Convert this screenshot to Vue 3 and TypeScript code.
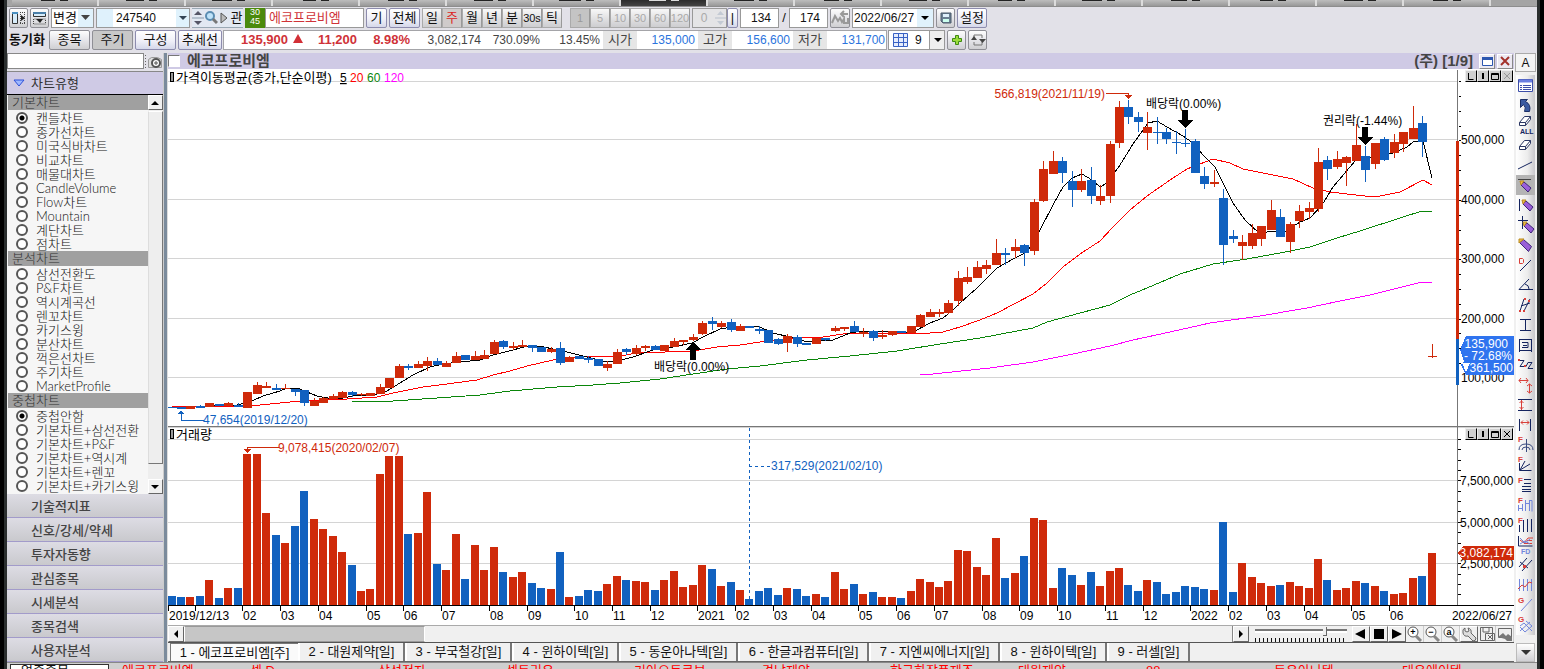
<script setup lang="ts">
import { ref } from 'vue'

type Shape = { d?: string; s?: string; f?: string; w?: number; t?: string; x?: number; y?: number; z?: number }

const RED = '#cf2a0a'
const BLUE = '#1161bf'
const NAVY = '#14245f'
const MARK = '#d9403a'
const SOFT = '#7186dc'

const code = ref('247540')
const issueName = ref('에코프로비엠')
const bars = ref('134')
const total = ref('174')
const sliderPos = ref(77)
const chartType = ref('캔들차트')
const overlayType = ref('중첩안함')

const periods = ['일', '주', '월', '년', '분', '30s', '틱']
const minutes = ['1', '5', '10', '30', '60', '120']
const topTabs = [14, 18, 20, 13, 16, 19, 22, 17, 20, 15, 18, 14, 20, 16, 13, 19, 15]
const mainGroups = [
  { title: '기본차트', name: 'base', items: ['캔들차트', '종가선차트', '미국식바차트', '비교차트', '매물대차트', 'CandleVolume', 'Flow차트', 'Mountain', '계단차트', '점차트'] },
  { title: '분석차트', name: 'base', items: ['삼선전환도', 'P&F차트', '역시계곡선', '렌꼬차트', '카기스윙', '분산차트', '꺽은선차트', '주기차트', 'MarketProfile'] },
]
const overlays = ['중첩안함', '기본차트+삼선전환', '기본차트+P&F', '기본차트+역시계', '기본차트+렌꼬', '기본차트+카기스윙']
const sections = ['기술적지표', '신호/강세/약세', '투자자동향', '관심종목', '시세분석', '종목검색', '사용자분석']
const chartTabs = [
  { t: '1 - 에코프로비엠[주]', w: 128 },
  { t: '2 - 대원제약[일]', w: 107 },
  { t: '3 - 부국철강[일]', w: 107 },
  { t: '4 - 윈하이텍[일]', w: 107 },
  { t: '5 - 동운아나텍[일]', w: 119 },
  { t: '6 - 한글과컴퓨터[일]', w: 131 },
  { t: '7 - 지엔씨에너지[일]', w: 131 },
  { t: '8 - 윈하이텍[일]', w: 107 },
  { t: '9 - 러셀[일]', w: 83 },
]
const ticker = ['에코프로비엠', '셀 D', '삼성전자', '셀트리온', '기아오토큐브', '경남제약', '한국화장품제조', '대원제약', '88', '동운아나텍', '대유에이텍']

// body top, body bottom, high, low, rising flag, volume top
const raw = `407 408 407 408 0 596|407 409 407 409 0 597|406 409 406 409 1 597|406 408 405 408 0 596|403 407 403 407 1 580|404 406 404 406 0 598|403 406 402 406 1 588|405 407 403 407 0 588|392 408 392 408 1 454|385 394 382 394 1 454|386 388 382 388 1 513|388 390 384 390 0 535|388 389 384 389 1 543|389 392 389 396 0 526|390 403 390 406 0 491|401 406 398 406 1 519|398 403 397 403 1 529|396 399 394 399 1 536|392 398 391 398 1 552|392 395 391 397 0 565|394 395 393 396 1 591|393 396 393 396 1 589|387 394 384 394 1 474|378 388 378 388 1 456|366 378 364 378 1 456|366 368 364 370 0 534|364 368 361 368 1 533|361 366 357 371 1 492|361 365 358 365 0 564|363 367 361 367 1 570|356 363 352 363 1 534|355 360 355 360 0 579|356 360 351 360 1 545|355 359 350 359 1 570|342 354 340 354 1 547|341 347 340 349 0 572|346 348 342 350 1 577|345 347 340 347 1 572|345 348 345 352 0 583|347 352 347 352 0 588|349 352 347 353 1 589|348 363 342 365 0 552|357 362 356 362 1 597|356 359 356 359 0 596|358 360 356 363 0 590|359 366 359 366 0 591|364 368 361 371 1 584|352 364 349 364 1 576|349 352 348 355 0 580|348 354 345 355 1 581|346 348 345 351 1 582|346 350 345 350 0 590|345 351 345 351 1 580|341 347 338 347 1 571|340 342 340 345 1 587|337 340 334 341 1 585|323 334 321 335 1 565|321 324 317 330 0 569|323 327 321 328 1 586|322 330 319 332 0 582|326 331 324 331 1 590|326 328 326 328 0 599|329 331 326 334 0 591|330 343 330 343 0 588|339 344 338 345 0 595|336 343 334 352 1 588|337 344 335 347 0 589|343 345 343 345 0 596|338 344 338 344 1 594|338 340 338 341 0 597|328 331 326 332 1 572|327 329 327 331 1 589|326 332 321 332 0 584|332 334 328 337 1 594|331 338 330 341 0 592|335 337 330 339 1 597|331 335 331 336 1 597|331 333 331 333 0 598|326 333 326 333 1 591|315 327 314 327 1 579|312 317 309 317 1 582|312 314 309 317 1 587|303 313 300 314 1 581|278 301 271 306 1 550|277 282 267 284 1 551|267 278 261 278 1 567|265 269 260 274 1 575|253 265 239 265 1 538|253 255 248 265 0 578|247 251 239 258 1 573|245 253 244 266 0 556|202 251 199 255 1 518|169 201 161 202 1 520|161 174 151 174 1 588|161 173 157 183 0 568|181 190 171 207 0 575|181 190 169 192 1 585|180 196 167 204 0 572|196 201 185 205 1 586|144 196 141 203 1 571|107 143 101 148 1 568|107 117 100 124 0 585|117 122 112 132 0 591|127 133 112 150 1 580|132 133 117 144 0 582|132 139 128 144 0 594|142 143 131 154 0 592|143 144 129 147 0 586|141 173 139 173 0 587|176 184 167 189 0 589|182 184 170 187 1 590|198 245 189 265 0 522|236 239 230 243 0 592|242 246 235 260 1 563|233 246 224 249 1 577|226 239 226 246 1 583|210 230 200 230 1 586|217 237 209 237 0 585|224 242 222 253 1 582|211 221 205 228 1 586|208 212 202 219 1 588|162 209 148 212 1 559|160 169 156 180 0 580|159 167 151 169 1 590|157 163 156 186 1 588|145 161 124 161 1 581|156 170 146 182 0 583|143 164 143 169 1 586|139 160 137 161 0 591|142 153 134 158 1 594|132 144 132 152 1 593|128 139 106 139 1 578|123 142 116 157 0 576|356 357 344 358 1 553`

const candles = raw.split('|').map((row, i) => {
  const [top, bottom, high, low, up, vol] = row.split(' ').map(Number)
  const x = Math.round(167.5 + i * 9.475)
  return { x, top, h: bottom - top, high, low, vol, color: up ? RED : BLUE }
})

const averages = [
  { color: '#ff00ff', points: '920,374 933,374 990,368 1033,362 1073,354 1110,346 1133,340 1170,332 1210,323 1260,316 1307,308 1340,301 1370,295 1390,290 1422,282 1432,282' },
  { color: '#0a860a', points: '352,401 393,401 437,398 480,395 510,391 557,387 593,385 620,383 660,379 693,374 727,369 760,366 807,360 850,356 897,351 940,344 980,338 1033,328 1047,322 1080,313 1110,305 1130,295 1147,288 1180,274 1213,264 1247,259 1280,253 1310,247 1337,238 1360,231 1400,218 1422,211 1432,211' },
  { color: '#ff0000', points: '171,406 237,407 260,405 290,402 320,400 347,399 377,397 393,393 423,387 447,384 477,380 493,375 510,371 527,366 553,360 567,358 583,356 620,356 637,353 693,351 717,347 740,345 760,342 800,338 823,337 843,334 877,333 917,334 943,332 960,327 980,320 997,313 1033,294 1047,283 1063,267 1080,254 1100,241 1113,227 1130,210 1147,196 1170,180 1187,169 1213,159 1230,163 1243,169 1263,173 1293,179 1313,188 1330,192 1347,194 1365,196 1380,196 1400,192 1423,180 1432,185' },
  { color: '#000000', points: '210,406 237,405 252,401 263,396 280,391 287,388 297,388 307,392 317,396 333,399 343,398 353,396 373,395 387,391 400,383 413,375 430,367 443,364 460,362 480,360 493,355 513,350 527,346 540,346 557,350 567,352 587,357 603,361 617,361 633,357 653,350 673,347 692,343 703,337 720,329 737,326 760,327 773,333 790,337 807,342 833,340 850,333 863,331 890,332 913,332 930,323 943,318 953,310 960,303 977,288 997,268 1015,258 1027,252 1040,230 1053,205 1063,187 1072,178 1082,174 1092,180 1100,187 1107,183 1120,165 1133,144 1148,123 1157,121 1167,127 1183,136 1193,143 1203,155 1215,167 1225,187 1233,203 1245,220 1260,234 1270,231 1287,232 1292,227 1300,222 1310,218 1322,205 1333,187 1355,161 1375,157 1393,153 1407,147 1413,142 1423,141 1432,178' },
]

const priceGrid = [81, 139, 199, 258, 318, 377]
const volumeGrid = [439, 480, 522, 563]
const priceLabels = [
  { y: 139, t: '500,000' }, { y: 199, t: '400,000' }, { y: 258, t: '300,000' }, { y: 318, t: '200,000' }, { y: 377, t: '100,000' },
]
const volumeLabels = [
  { y: 480, t: '7,500,000' }, { y: 522, t: '5,000,000' }, { y: 563, t: '2,500,000' },
]
const priceTicks = Array.from({ length: 20 }, (_, i) => Math.round(81 + i * 14.85))
const volumeTicks = Array.from({ length: 16 }, (_, i) => Math.round(439 + i * 10.35))
const months: [number, string][] = [
  [168, '2019/12/13'], [195, ''], [242, '02'], [280, '03'], [318, '04'], [366, '05'], [403, '06'], [441, '07'], [489, '08'], [527, '09'],
  [574, '10'], [612, '11'], [650, '12'], [697, '2021'], [735, '02'], [773, '03'], [811, '04'], [858, '05'], [896, '06'], [934, '07'],
  [982, '08'], [1019, '09'], [1057, '10'], [1105, '11'], [1143, '12'], [1190, '2022'], [1228, '02'], [1266, '03'], [1304, '04'], [1351, '05'], [1389, '06'],
]

const pencil = (x: number, y: number): Shape[] => [
  { d: `M${x + 1} ${y + 3}l3 -3 7 6 -3 4z`, f: '#9a5fd8', s: '#3d2478' },
  { d: `M${x} ${y - 1}h4l-3 4z`, f: '#f0c04a', s: '#b98a20' },
]
const eraser = (y: number): Shape[] => [
  { d: `M3.5 ${y + 6.5}l5 -6h6l-5 6zM3.5 ${y + 6.5}v3h6v-3M9.5 ${y + 9.5}l5 -6v-3`, s: '#2b3763', f: '#fff' },
]
const mark = (t: string, y = 8): Shape => ({ t, x: 2, y, z: 8, f: MARK })
const tools: { name: string; shapes: Shape[] }[] = [
  { name: '목록', shapes: [{ d: 'M2.5 4.5h14v12h-14z', s: '#3c4ea8', f: '#fff' }, { d: 'M3 6h13', s: '#6a7ee0', w: 3 }, { d: 'M4 10.5h2M4 12.5h2M4 14.5h2M7 10.5h8M7 12.5h8M7 14.5h8', s: '#3c4ea8' }] },
  { name: '실행취소', shapes: [{ d: 'M4.500 4.500h7l-2 2q6 3 4 10h-5q2-4-1-7l-3 3z', f: '#3a5aa0', s: '#1c2f66' }] },
  { name: '전체지우기', shapes: [...eraser(1), { t: 'ALL', x: 4, y: 19, z: 7, f: NAVY }] },
  { name: '지우기', shapes: eraser(5) },
  { name: '추세선', shapes: [{ d: 'M2 14L16 7', s: NAVY }] },
  { name: '수평선', shapes: [{ d: 'M2 4.5h13', s: '#444' }, ...pencil(4, 7)] },
  { name: '수직선', shapes: [{ d: 'M3.5 4v12', s: NAVY }, ...pencil(6, 6)] },
  { name: '십자선', shapes: [{ d: 'M6.5 1v13M2 5.5h10', s: NAVY }, ...pencil(7, 8)] },
  { name: '자유선', shapes: [{ d: 'M3.5 7.5l4-3 8 7-3 5z', f: '#9a5fd8', s: '#3d2478' }, { d: 'M3 4h5l-5 4z', f: '#f0c04a', s: '#b98a20' }] },
  { name: '가격선', shapes: [{ d: 'M3.5 3.5h3l1 1v3l-1 1h-3z', s: MARK }, { d: 'M4 16L15 5', s: NAVY }] },
  { name: '각도선', shapes: [{ d: 'M13 4L3 14.5h14M9 9q4 1 4 5', s: NAVY }] },
  { name: '평행선', shapes: [{ d: 'M4 16L8 4M8 16L14 4M5 11l9-3', s: NAVY }, { d: 'M3 15h2v2h-2zM8 3h2v2h-2zM12 5h2v2h-2zM7 15h2v2h-2z', f: MARK }] },
  { name: '구간', shapes: [{ d: 'M4 4.5h11M4 15.5h11M9.5 4v12', s: NAVY }] },
  { name: '사각형', shapes: [{ d: 'M3.5 4v13M15.5 4v13M3 4.5h12M3 15.5h12M6 7.5h6v5h-6M7 10.5h4', s: NAVY }] },
  { name: '지그재그', shapes: [{ d: 'M3 5.5h5l-4 6h6l2-4h4l-4 6h5', s: NAVY }, { d: 'M2 4h2v2h-2zM8 10h2v2h-2z', f: MARK }] },
  { name: '이동폭', shapes: [{ d: 'M3 5.5h9M5 3l-2 2.5 2 2.5M10 3l2 2.5 -2 2.5M13.5 9v9M11 11l2.5 -2 2.5 2M11 16l2.5 2 2.5 -2', s: MARK }] },
  { name: '세로폭', shapes: [{ d: 'M2 4.5h14M2 15.5h14', s: NAVY }, { d: 'M5.5 5v10M3.5 8l2-2 2 2M3.5 12l2 2 2-2', s: MARK }] },
  { name: '가로폭', shapes: [{ d: 'M3.5 4v12M14.5 4v12', s: NAVY }, { d: 'M5 7.5h8M7 5.500l-2 2 2 2M11 5.5l2 2-2 2', s: MARK }] },
  { name: '피보나치 원', shapes: [mark('F', 7), { d: 'M10.5 4v13M3 15q0-6 7-6t7 6M6 15q0-3 4-3t4 3', s: '#3a4c80' }] },
  { name: '피보나치 부채', shapes: [mark('F', 7), { d: 'M3.5 8v7.5h12M4 15l5-9M4 15l10-6', s: NAVY }] },
  { name: '피보나치 수평', shapes: [mark('F'), { d: 'M8 4.5h7M8 8.5h7M6 11.5h9M6 14.5h9M6 16.5h9', s: NAVY }] },
  { name: '피보나치 주기', shapes: [mark('F'), { d: 'M2.5 10v6M3 13.5h4M6.5 9v7M9.5 5v11M9 8.5h4M13.5 5v11M13 5.5h3v11', s: SOFT }] },
  { name: '피보나치 시간', shapes: [mark('F'), { d: 'M3.5 10v7M7.5 5v12M11.5 4v13M15.5 4v13', s: NAVY }] },
  { name: '피보나치 디나폴리', shapes: [{ d: 'M2.5 1v10h14', s: NAVY }, { d: 'M4 5l4 3 4-5h5M8 8.5h8M11 5.5h5', s: MARK }, { d: 'M4 3l5 5 5-4M4 9l5-3 5 3', s: SOFT }, { t: 'FD', x: 5, y: 19, z: 7, f: SOFT }] },
  { name: '채널', shapes: [{ d: 'M3 12L11 3M6 16L16 5M4 7l8 6', s: NAVY }, { d: 'M7 10h3v3h-3z', f: MARK }] },
  { name: '파동', shapes: [{ d: 'M3.5 4v12M7.5 4v12M11.5 4v12M15.5 4v12', s: SOFT }, { d: 'M2 14l4-4 3 2 4-5 3 1', s: MARK }] },
  { name: '간선', shapes: [mark('G'), { d: 'M5 16L16 4', s: SOFT }] },
  { name: '간격자', shapes: [mark('G', 7), { d: 'M4 11l4-3 8 8M4 16l10-9M9 17l7-6M4 12l5 5M10 6l6 5', s: SOFT }] },
]
const activeTool = ref(5)
</script>

<template>
  <div class="app">
    <nav class="toptabs" aria-label="화면">
      <span v-for="(w, i) in topTabs" :key="i" class="toptab" :class="{ on: i === 7 }">
        <i class="stub" :style="{ width: w + 'px' }"></i><i class="stub thin"></i>
      </span>
    </nav>

    <header class="bars">
      <div class="bar">
        <button class="tb w19" aria-label="왼쪽 패널"><svg width="16" height="16"><path d="M1.5 2.5h5v11h-5z" fill="#d7ecfa" stroke="#333" /><path d="M1 2h6v2h-6z" fill="#4a8fc0" /><path d="M9.5 2v12M13.5 2v12M9 2.5h5M9 13.5h5" stroke="#444" stroke-dasharray="1 1" /><path d="M10 5l4 3-4 3z" fill="#222" /></svg></button>
        <button class="tb w19" aria-label="상단 패널"><svg width="16" height="16"><path d="M1.5 2.5h12v4h-12z" fill="#d7ecfa" stroke="#333" /><path d="M1 2h13v2h-13z" fill="#4a7fa8" /><path d="M1.5 9v5h12v-5z" fill="none" stroke="#444" stroke-dasharray="1 1" /><path d="M4 9h7l-3 4z" fill="#222" /></svg></button>
        <span class="pick w43"><select aria-label="변경"><option>변경</option></select><svg class="arr" width="15" height="17"><path d="M3 6h9l-4.500 5z" fill="#444" /></svg></span>
        <span class="codebox"><i class="tint"></i><input v-model="code" aria-label="종목코드" /><svg class="arr" width="13" height="17"><path d="M3 7h8l-4 4z" fill="#345" /></svg></span>
        <span class="flats">
          <button class="w12" aria-label="증감"><svg width="12" height="18"><path d="M0 9h12" stroke="#89a" /><path d="M2 6h8l-4-4zM2 12h8l-4 4z" fill="#556" /></svg></button>
          <button class="w14" aria-label="검색"><svg width="14" height="18"><circle cx="6" cy="7" r="4" fill="#bfe3fa" stroke="#5b8db2" stroke-width="2" /><path d="M9 10l4 4" stroke="#777" stroke-width="3" /></svg></button>
          <button class="w12" aria-label="다음"><svg width="12" height="18"><path d="M3 4l6 5-6 5z" fill="#bbb" stroke="#555" /></svg></button>
          <button class="w13">관</button>
        </span>
        <span class="ratio"><b>30</b><b>45</b></span>
        <input v-model="issueName" class="issue" aria-label="종목명" />
        <button class="tb blue w21">기</button>
        <button class="tb blue w31">전체</button>
        <span class="seg"><button v-for="p in periods" :key="p" :class="{ on: p === '주' }">{{ p }}</button></span>
        <span class="seg off"><button v-for="m in minutes" :key="m" disabled :class="{ on: m === '1' }">{{ m }}</button></span>
        <span class="zero"><input value="0" disabled aria-label="틱 값" /><svg width="11" height="18"><path d="M0 9h11" stroke="#b8c0cc" /><path d="M2 6h7l-3.5 -4zM2 12h7l-3.5 4z" fill="#c3cad4" /></svg></span>
        <button class="tb blue w11">|</button>
        <input v-model="bars" class="num" aria-label="봉 개수" />
        <span class="slash">/</span>
        <input v-model="total" class="num" aria-label="전체 봉" />
        <button class="tb w20" aria-label="비교"><svg width="18" height="16"><path d="M1 13l3-7 3 5 2-3 2 4 2-3v4h4v-5M17 4h-6M13 1l-3 3 3 3" fill="none" stroke="#999" stroke-width="2" /></svg></button>
        <span class="pick w82"><select aria-label="날짜"><option>2022/06/27</option></select><svg class="arr" width="16" height="17"><path d="M4 7h8l-4 4z" fill="#000" /></svg></span>
        <button class="tb w19" aria-label="저장"><svg width="16" height="16"><path d="M3 3h10v10h-8l-2-2z" fill="#6b7f92" stroke="#4a5a6a" /><path d="M5 4h6v3h-6z" fill="#dff0fb" /><path d="M5 9h6v3h-6z" fill="#cfe" /></svg></button>
        <button class="tb blue w30">설정</button>
      </div>
      <div class="bar">
        <b class="sync">동기화</b>
        <button class="tb w41">종목</button>
        <button class="tb on w41">주기</button>
        <button class="tb blue w41">구성</button>
        <button class="tb blue w44">추세선</button>
        <div class="quote">
          <b class="up q64">135,900</b>
          <svg class="tri" width="16" height="16"><path d="M8 3l5 9h-10z" fill="#d22f36" /></svg>
          <b class="up q51">11,200</b>
          <b class="up q53">8.98%</b>
          <span class="q71">3,082,174</span>
          <span class="q59">730.09%</span>
          <span class="q60">13.45%</span>
          <span class="lab">시가</span><span class="dn">135,000</span>
          <span class="lab">고가</span><span class="dn">156,600</span>
          <span class="lab">저가</span><span class="dn">131,700</span>
        </div>
        <span class="pick w57 grid9"><svg class="gicon" width="16" height="16"><path d="M.5 1.5h14v13h-14zM5.5 1v14M10.5 1v14M0 5.5h15M0 10.5h15" fill="#e6edfd" stroke="#3a62c4" /></svg><select aria-label="분할"><option>9</option></select><svg class="arr" width="15" height="17"><path d="M4 7h8l-4 4z" fill="#000" /></svg></span>
        <button class="tb w19" aria-label="추가"><svg width="16" height="16"><path d="M6.5 3.5h3v3h3v3h-3v3h-3v-3h-3v-3h3z" fill="#9bdc3c" stroke="#3f8a12" /></svg></button>
        <button class="tb w19" aria-label="새로고침"><svg width="16" height="16"><path d="M4 6v-3h8v3M4 10v3h8v-3" fill="none" stroke="#777" /><path d="M1 8l3-4 3 4zM9 7h7l-3.5 4z" fill="#444" /></svg></button>
      </div>
    </header>

    <div class="body">
      <aside class="side">
        <div class="find">
          <input aria-label="차트 검색" />
          <button aria-label="찾기"><svg width="18" height="17"><path d="M.5 1v15" stroke="#666" stroke-dasharray="1 2" /><path d="M3.5 5.5l3-2h6l4 2v8h-13z" fill="#ddd" stroke="#999" /><circle cx="11" cy="9" r="4" fill="#fff" stroke="#555" stroke-width="2" /><path d="M9 9h4M11 7v4" stroke="#555" /></svg></button>
        </div>
        <button class="head"><svg width="12" height="9"><path d="M1 1h10l-5 6z" fill="#9fb8ff" stroke="#2d50d8" /></svg>차트유형</button>
        <div class="scroll">
          <div class="list">
            <fieldset v-for="g in mainGroups" :key="g.title">
              <legend>{{ g.title }}</legend>
              <label v-for="it in g.items" :key="it"><input v-model="chartType" type="radio" :name="g.name" :value="it" /><span>{{ it }}</span></label>
            </fieldset>
            <fieldset>
              <legend>중첩차트</legend>
              <label v-for="it in overlays" :key="it"><input v-model="overlayType" type="radio" name="overlay" :value="it" /><span>{{ it }}</span></label>
            </fieldset>
          </div>
          <div class="vbar">
            <button aria-label="위로"><svg width="9" height="6"><path d="M0 5h8l-4-4z" /></svg></button>
            <div class="vthumb"></div>
            <div class="vrest"></div>
            <button aria-label="아래로"><svg width="9" height="6"><path d="M0 1h8l-4 4z" /></svg></button>
          </div>
        </div>
        <button v-for="s in sections" :key="s" class="sec">{{ s }}</button>
      </aside>
      <div class="splitter"></div>

      <main class="chart">
        <div class="title">
          <input type="checkbox" aria-label="차트 선택" />
          <h1>에코프로비엠</h1>
          <b>(주) [1/9]</b>
          <button aria-label="최대화"><svg width="13" height="13"><path d="M1.5 2.5h10v8h-10z" fill="#fff" stroke="#2c56b0" /><path d="M1 2h11v3h-11z" fill="#2c56b0" /></svg></button>
          <button aria-label="닫기"><svg width="13" height="13"><path d="M2 2l8 8M10 2l-8 8" stroke="#a3312c" stroke-width="2" /></svg></button>
        </div>
        <div class="plot">
          <svg class="canvas" viewBox="168 69 1346 556" shape-rendering="crispEdges">
            <g stroke="#d4d4d4">
              <path v-for="y in priceGrid" :key="y" :d="`M168 ${y + 0.5}H1457`" />
              <path v-for="y in volumeGrid" :key="y" :d="`M168 ${y + 0.5}H1457`" />
              <path d="M168 427.5H1514" />
            </g>
            <path d="M1457.5 70V605" stroke="#777" />
            <path d="M168 426.5H1514" stroke="#777" />
            <polyline v-for="a in averages" :key="a.color" :points="a.points" fill="none" :stroke="a.color" />
            <g v-for="c in candles" :key="c.x" :fill="c.color">
              <rect :x="c.x + 4" :y="c.high" width="1" :height="c.low - c.high" />
              <rect :x="c.x" :y="c.top" width="9" :height="c.h" />
              <rect :x="c.x" :y="c.vol" width="8" :height="605 - c.vol" />
            </g>
            <rect x="1456" y="141" width="3" height="198" :fill="RED" />
            <rect x="1456" y="339" width="3" height="46" :fill="BLUE" />
            <g stroke="#000">
              <path v-for="y in priceTicks" :key="'p' + y" :d="`M1459 ${y + 0.5}h2`" />
              <path v-for="y in volumeTicks" :key="'v' + y" :d="`M1458 ${y + 0.5}h3`" />
              <path d="M168 605.5H1514" />
              <path v-for="m in months" :key="m[0]" :d="`M${m[0] + 0.5} 606v5`" />
            </g>
            <g class="t">
              <text v-for="l in priceLabels" :key="l.t" x="1461" :y="l.y + 5">{{ l.t }}</text>
              <text v-for="l in volumeLabels" :key="l.t" x="1460" :y="l.y + 5">{{ l.t }}</text>
              <text v-for="m in months" :key="m[0]" :x="m[0] + 1" y="620">{{ m[1] }}</text>
              <text x="1512" y="620" text-anchor="end">2022/06/27</text>
            </g>

            <path d="M1466 336H1514V375H1466L1461 365 1464 361 1460 350z" fill="#2f74ef" />
            <g class="t" fill="#fff">
              <text x="1508" y="348" text-anchor="end">135,900</text>
              <text x="1512" y="360" text-anchor="end">- 72.68%</text>
              <text x="1513" y="372" text-anchor="end">361,500</text>
              <path d="M1462 363h8l-4 9z" />
            </g>
            <path d="M1463 546H1514V560H1463L1458 553z" :fill="RED" />
            <text class="t" x="1513" y="557" text-anchor="end" fill="#fff">3,082,174</text>

            <g class="t">
              <path d="M170.5 72.5h3v9h-3zM170.5 429.5h3v9h-3z" fill="#999" stroke="#000" />
              <text class="big" x="176" y="82">가격이동평균(종가,단순이평)</text>
              <text x="340" y="82" text-decoration="underline">5</text>
              <text x="350" y="82" fill="#ff0000">20</text>
              <text x="367" y="82" fill="#0a860a">60</text>
              <text x="384" y="82" fill="#ff00ff">120</text>
              <text class="big" x="176" y="439">거래량</text>
              <text x="654" y="371">배당락(0.00%)</text>
              <text x="1146" y="108">배당락(0.00%)</text>
              <text x="1323" y="125">권리락(-1.44%)</text>
              <path d="M693 342l8 8h-5v10h-6v-10h-5zM1185 128l-8-8h5v-10h6v10h5zM1365 145l-8-8h5v-10h6v10h5z" />
            </g>
            <g class="t" :fill="BLUE">
              <text x="203" y="424">47,654(2019/12/20)</text>
              <text x="771" y="470">317,529(2021/02/10)</text>
              <path d="M178 414h6l-3-4z" />
              <path d="M181.5 412v8.500h22" fill="none" :stroke="BLUE" />
              <path d="M749.5 428v177M749 466.5h22" fill="none" :stroke="BLUE" stroke-dasharray="3 3" />
            </g>
            <g class="t" :fill="RED">
              <text x="278" y="452">9,078,415(2020/02/07)</text>
              <text x="1105" y="98" text-anchor="end">566,819(2021/11/19)</text>
              <path d="M244 449h7l-3.5 4zM1125 95h7l-3.5 4z" />
              <path d="M247.5 450v-2.5h31M1106 93.5h22.500v3" fill="none" :stroke="RED" />
            </g>
          </svg>
          <div v-for="pane in ['one', 'two']" :key="pane" class="ctl" :class="pane">
            <button aria-label="선 유형"><svg width="10" height="9"><path d="M2.5 1v6.500h5" /></svg></button>
            <button aria-label="분할"><svg width="10" height="9"><path d="M5 1v6" stroke-width="2" /></svg></button>
            <button aria-label="확대"><svg width="10" height="9"><path d="M1.5 1.5h7v6h-7zM1 2.5h8" /></svg></button>
            <button aria-label="닫기"><svg width="10" height="9"><path d="M2 1l6 6M8 1l-6 6" /></svg></button>
          </div>
        </div>

        <div class="hrow">
          <button class="raised" aria-label="이전"><svg width="6" height="9"><path d="M5 0v8l-4-4z" /></svg></button>
          <div class="track"><div class="thumb"></div></div>
          <button class="raised" aria-label="다음"><svg width="6" height="9"><path d="M1 0v8l4-4z" /></svg></button>
          <div class="zoombar"><input v-model="sliderPos" type="range" aria-label="배율" /><i class="ruler"></i></div>
          <button class="raised w18" aria-label="뒤로"><svg width="14" height="13"><path d="M11 1v10l-10-5z" /></svg></button>
          <button class="raised w18" aria-label="정지"><svg width="14" height="13"><path d="M2 1h10v10h-10z" /></svg></button>
          <button class="raised w18" aria-label="앞으로"><svg width="14" height="13"><path d="M2 1v10l10-5z" /></svg></button>
          <button v-for="z in ['+', '−', 'a']" :key="z" class="plain" :aria-label="'확대 축소 ' + z"><svg width="17" height="16"><circle cx="7" cy="6" r="5" fill="#fff" stroke="#555" /><path d="M10 10l5 5" stroke="#888" stroke-width="3" /><text x="7" y="9" text-anchor="middle" font-size="9" font-weight="700">{{ z }}</text></svg></button>
          <button class="raised w18" aria-label="도구"><svg width="16" height="15"><path d="M2 6q-1-4 2-5v3l2 1 2-1-1-3q4 1 3 5l5 5q0 3-3 3l-5-5q-4 1-5-3z" fill="#ddd" stroke="#666" /></svg></button>
          <button class="plain" aria-label="저장"><svg width="17" height="16"><path d="M2.5 1.5h12v13h-12zM5 2v4h6v-4M7.5 7.5h9v7h-9z" fill="#eee" stroke="#666" /><path d="M10 9l4 4M14 9l-4 4" stroke="#666" /></svg></button>
          <button class="plain" aria-label="그림"><svg width="16" height="16"><path d="M1.5 2.5h13v9h-13z" fill="#eee" stroke="#666" /><path d="M1 11l5-4 3 3 2-2 4 3v4h-5l-2-2z" fill="#777" /></svg></button>
        </div>
        <nav class="tabs" aria-label="차트 탭">
          <button v-for="(t, i) in chartTabs" :key="i" :class="{ on: i === 0 }" :style="{ width: t.w + 'px' }">{{ t.t }}</button>
        </nav>
      </main>

      <aside class="tools">
        <button class="letter">A</button>
        <div class="stack">
          <button v-for="(tool, i) in tools" :key="tool.name" :aria-label="tool.name" :class="{ on: i === activeTool }" @click="activeTool = i">
            <svg width="19" height="20">
              <template v-for="(p, k) in tool.shapes" :key="k">
                <text v-if="p.t" :x="p.x" :y="p.y" :font-size="p.z" font-weight="700" :fill="p.f">{{ p.t }}</text>
                <path v-else :d="p.d" :stroke="p.s || 'none'" :fill="p.f || 'none'" :stroke-width="p.w || 1" />
              </template>
            </svg>
          </button>
        </div>
        <button class="more" aria-label="더보기"><svg width="12" height="7"><path d="M1 1h10l-5 5z" fill="#333" /></svg></button>
      </aside>
    </div>

    <footer class="foot">
      <span class="fbox">업종종목</span>
      <span v-for="t in ticker" :key="t" class="fitem">{{ t }}</span>
    </footer>
  </div>
</template>

<style>
html,
body {
  background: #000;
  overflow-x: hidden;
}
</style>

<style scoped>
* {
  box-sizing: border-box;
}
.app {
  font-family: "Liberation Sans", "Noto Sans CJK KR", sans-serif;
  font-size: 13px;
  line-height: 16px;
  color: #111;
  background: #2a2e2e;
  border: 0 solid #000;
  border-width: 0 4px;
  padding: 0 3px;
}
button,
input,
select {
  font: inherit;
  color: inherit;
  margin: 0;
  padding: 0;
  border: 0;
  border-radius: 0;
  background: none;
  min-width: 0;
}
button {
  display: flex;
  align-items: center;
  justify-content: center;
  flex: none;
  white-space: nowrap;
}
svg {
  flex: none;
  display: block;
}
.toptabs {
  display: flex;
  height: 7px;
  padding-left: 5px;
  background: #a4a4a4;
  overflow: hidden;
  border-bottom: 1px solid #8d8d8d;
}
.toptab {
  flex: none;
  width: 87px;
  border-right: 2px solid #dcdcdc;
  background: linear-gradient(#bdbdbd, #989898);
  display: flex;
  gap: 5px;
  justify-content: center;
}
.toptab.on {
  background: linear-gradient(#2c2c2c, #444);
}
.stub {
  height: 1px;
  background: #222;
}
.on .stub {
  background: #ddd;
}
.stub.thin {
  width: 8px;
}
.bars {
  display: flex;
  flex-direction: column;
  gap: 2px;
  padding: 1px 0 3px 2px;
  overflow: hidden;
  background: #e2e1e8;
}
.bar {
  display: flex;
  height: 20px;
  gap: 2px;
  align-items: stretch;
}
.tb {
  border: 1px solid #8f8f96;
  border-radius: 2px;
  background: linear-gradient(#fdfdfd, #e6e6ea 50%, #cfcfd2);
}
.tb.blue {
  border-color: #8d8cae;
  background: linear-gradient(#fff, #f0f0f8 55%, #d5d8ea);
}
.tb.on {
  background: #c8c8c8;
}
.w11 { width: 11px; }
.w12 { width: 12px; }
.w13 { width: 13px; }
.w14 { width: 14px; }
.w18 { width: 18px; }
.w19 { width: 19px; }
.w20 { width: 20px; }
.w21 { width: 21px; }
.w30 { width: 30px; }
.w31 { width: 31px; }
.w41 { width: 41px; }
.w43 { width: 43px; }
.w44 { width: 44px; }
.w57 { width: 57px; }
.w82 { width: 82px; }
.pick,
.codebox,
.zero {
  display: flex;
  flex: none;
  align-items: center;
  border: 1px solid #999;
  background: #fff;
}
.pick {
  position: relative;
}
.pick select {
  appearance: none;
  flex: 1;
  height: 18px;
  font-size: 12px;
  padding-left: 1px;
}
.w43 select {
  font-size: 13px;
}
.arr {
  background: #e0f2fc;
  height: 18px;
  pointer-events: none;
}
.grid9 .arr {
  background: #eee;
  border-left: 1px solid #999;
}
.grid9 .gicon {
  margin-left: 4px;
}
.grid9 select {
  padding-left: 6px;
}
.codebox {
  width: 94px;
}
.tint {
  width: 16px;
  align-self: stretch;
  background: #dff1fc;
}
.codebox input {
  flex: 1;
  width: 0;
  font-size: 12px;
  padding-left: 3px;
}
.flats {
  display: flex;
  flex: none;
  background: #e2e8f2;
  border: 1px solid #9aa8b4;
  border-width: 1px 0;
}
.ratio {
  flex: none;
  width: 20px;
  margin-right: -2px;
  background: #4b8a0c;
  color: #fff;
  font-size: 9px;
  line-height: 9px;
  text-align: center;
}
.ratio b {
  display: block;
  font-weight: 400;
}
.issue {
  width: 99px;
  flex: none;
  background: #fff;
  border: 1px solid #999;
  color: #cf3238;
  padding-left: 3px;
}
.seg {
  display: flex;
  flex: none;
}
.seg button {
  width: 20px;
  border: 1px solid #aaa;
  border-right-color: #999;
  background: linear-gradient(#f8f8f8, #cdcdd0);
  font-size: 13px;
}
.seg button:nth-child(6) {
  font-size: 11px;
}
.seg .on {
  background: #cfcbcb;
  color: #d22;
}
.seg.off {
  margin-left: 6px;
}
.seg.off button {
  color: #a9a9a9;
  font-size: 11px;
}
.seg.off .on {
  background: #c4c4c4;
  color: #9a9a9a;
}
.zero {
  width: 35px;
  background: #e4e4e6;
  margin-right: -2px;
}
.zero input {
  width: 22px;
  text-align: center;
  font-size: 12px;
  color: #aaa;
}
.num {
  flex: none;
  width: 39px;
  background: #fff;
  border: 1px solid #999;
  font-size: 12px;
  text-align: right;
  padding-right: 7px;
}
.slash {
  width: 6px;
  text-align: center;
  line-height: 20px;
}
.sync {
  width: 38px;
  font-size: 13px;
  line-height: 20px;
  white-space: nowrap;
}
.quote {
  display: flex;
  flex: none;
  width: 664px;
  margin: 0 -1px;
  border: 1px solid #a4a4a8;
  background: #fff;
  line-height: 18px;
  font-size: 12px;
  color: #444;
  text-align: right;
}
.quote > * {
  flex: none;
}
.up {
  color: #cf3238;
  font-size: 13px;
}
.tri {
  margin-left: 2px;
}
.q64 { width: 64px; }
.q51 { width: 51px; }
.q53 { width: 53px; }
.q71 { width: 71px; }
.q59 { width: 59px; }
.q60 { width: 60px; }
.quote .lab {
  width: 34px;
  margin-left: 3px;
  background: #e6e6e6;
  text-align: center;
  font-size: 13px;
}
.quote .dn {
  width: 58px;
  color: #2b74dd;
}
.body {
  display: flex;
}
.side {
  flex: none;
  width: 156px;
  display: flex;
  flex-direction: column;
  background: #e2e1e8;
}
.find {
  display: flex;
  height: 18px;
}
.find input {
  width: 137px;
  height: 16px;
  background: #fff;
  border: 1px solid #888;
}
.find button {
  width: 19px;
}
.head {
  height: 23px;
  justify-content: flex-start;
  gap: 6px;
  padding-left: 6px;
  background: #cfcae5;
  border-top: 1px solid #888;
  font-family: "Noto Sans CJK KR", sans-serif;
  color: #333;
}
.scroll {
  display: flex;
  height: 400px;
  border-top: 1px solid #000;
}
.list {
  flex: 1;
  background: #f6f6f6;
  padding-left: 1px;
  overflow: hidden;
  font-family: Lato, "Noto Sans CJK KR", sans-serif;
  font-size: 13px;
  font-weight: 300;
  color: #111;
}
fieldset {
  border: 0;
  margin: 0;
  padding: 0;
  min-width: 0;
}
legend {
  display: block;
  width: 100%;
  height: 15px;
  line-height: 15px;
  padding: 0 0 0 4px;
  margin-bottom: 1px;
  background: #a0a0a0;
  color: #333;
}
label {
  display: flex;
  align-items: center;
  height: 14px;
  line-height: 14px;
  gap: 8px;
  padding-left: 8px;
  white-space: nowrap;
}
label input {
  appearance: none;
  flex: none;
  width: 12px;
  height: 12px;
  border: 2px solid #555;
  border-radius: 50%;
  background: #fff;
}
label input:checked {
  background: radial-gradient(circle, #000 2px, #fff 3px);
}
.vbar {
  width: 15px;
  display: flex;
  flex-direction: column;
  background: #eee;
}
.vbar button,
.raised {
  background: #f0f0f0;
  border: 1px solid;
  border-color: #fff #666 #666 #fff;
}
.vbar button {
  height: 15px;
}
.vthumb {
  flex: 1;
  border: 1px solid;
  border-color: #fff #777 #777 #ddd;
  margin-top: 1px;
}
.vrest {
  height: 15px;
}
.sec {
  height: 24px;
  justify-content: flex-start;
  padding-left: 24px;
  border-bottom: 1px solid #a29bca;
  background: linear-gradient(#dddce4, #c9c9cd);
  font-family: "Noto Sans CJK KR", sans-serif;
  font-weight: 500;
  color: #444;
}
.splitter {
  flex: none;
  width: 5px;
  background: #7b8b9c;
  border-left: 1px solid #ccc;
  border-right: 1px solid #ddd;
}
.chart {
  flex: 1;
  min-width: 0;
  background: #f0f0f0;
}
.title {
  display: flex;
  align-items: center;
  height: 16px;
  gap: 2px;
  background: #cfcae5;
  color: #444;
  font-size: 15px;
  padding-right: 1px;
}
.title input {
  appearance: none;
  width: 12px;
  height: 12px;
  background: #fff;
  border: 1px solid;
  border-color: #777 #fff #fff #777;
}
.title h1 {
  flex: 1;
  margin: 0 0 0 5px;
  font-size: 15px;
  line-height: 16px;
}
.title b {
  margin-right: 4px;
}
.title button {
  width: 16px;
  height: 15px;
  background: #ece9f2;
  border: 1px solid;
  border-color: #fff #888 #888 #fff;
}
.plot {
  position: relative;
  background: #fff;
}
.canvas {
  width: 100%;
  height: auto;
}
.t {
  font-size: 12px;
}
.big {
  font-size: 13px;
}
.ctl {
  position: absolute;
  right: 1px;
  display: flex;
}
.ctl.one {
  top: 1px;
}
.ctl.two {
  top: 359px;
}
.ctl button {
  width: 12px;
  height: 12px;
  background: #d0d0d0;
  border: 1px solid;
  border-color: #eee #000 #000 #eee;
}
.ctl path {
  fill: none;
  stroke: #000;
}
.ctl.one button:last-child path {
  stroke: #999;
}
.hrow {
  display: flex;
  height: 17px;
  background: #f0f0f0;
  border-top: 1px solid #aaa;
}
.hrow > .raised {
  width: 16px;
}
.hrow > .raised.w18 {
  width: 18px;
}
.track {
  flex: 1;
  background: #f0f0f0;
  border-right: 1px solid #888;
}
.thumb {
  width: 23%;
  height: 16px;
  background: #c6c6c6;
  border: 1px solid;
  border-color: #999 #fff #999 #fff;
}
.zoombar {
  width: 103px;
  padding: 0 6px;
}
.zoombar input {
  appearance: none;
  display: block;
  width: 92px;
  height: 10px;
  background: linear-gradient(#f0f0f0 3px, #777 3px, #777 5px, #fff 5px, #fff 7px, #f0f0f0 7px);
}
.zoombar input::-webkit-slider-thumb {
  appearance: none;
  width: 4px;
  height: 9px;
  background: #f0f0f0;
  border-right: 1px solid #666;
  border-bottom: 1px solid #666;
}
.ruler {
  display: block;
  height: 4px;
  margin-top: 2px;
  background: repeating-linear-gradient(90deg, #111 0 1px, transparent 1px 4px);
}
.plain {
  width: 18px;
  border-right: 1px solid #ccc;
}
.tabs {
  display: flex;
  height: 20px;
  padding-left: 2px;
  border-top: 1px solid #555;
  border-bottom: 1px solid #666;
  background: #f0f0f0;
}
.tabs button {
  border-right: 2px solid #777;
  border-left: 2px solid #fff;
  font-size: 13px;
}
.tabs .on {
  background: #fafafa;
  border: 1px solid #777;
  border-right: 0;
  border-bottom: 0;
}
.tools {
  flex: none;
  width: 23px;
  display: flex;
  flex-direction: column;
  align-items: center;
  background: #f0f0f0;
}
.letter {
  width: 21px;
  height: 19px;
  background: #f4f4f4;
  border: 1px solid #aaa;
  font-size: 12px;
}
.stack {
  margin-top: 3px;
  width: 19px;
  background: linear-gradient(90deg, #fff, #ececec 60%, #c8c8cc);
}
.stack button {
  width: 19px;
  height: 20px;
}
.stack .on {
  background: #b4b4b4;
}
.more {
  width: 19px;
  height: 19px;
  margin-top: 8px;
  background: linear-gradient(#fff, #d0d0d4);
  border: 1px solid #bbb;
}
.foot {
  display: flex;
  height: 7px;
  overflow: hidden;
  background: #cfcfcf;
  border-top: 1px solid #888;
  padding: 1px 0 0 3px;
}
.fbox {
  flex: none;
  width: 99px;
  height: 20px;
  margin-right: 8px;
  padding-left: 10px;
  border: 1px solid #333;
  background: #fff;
  line-height: 12px;
}
.fitem {
  flex: none;
  width: 128px;
  padding-left: 5px;
  line-height: 14px;
  color: #f00;
}
</style>
